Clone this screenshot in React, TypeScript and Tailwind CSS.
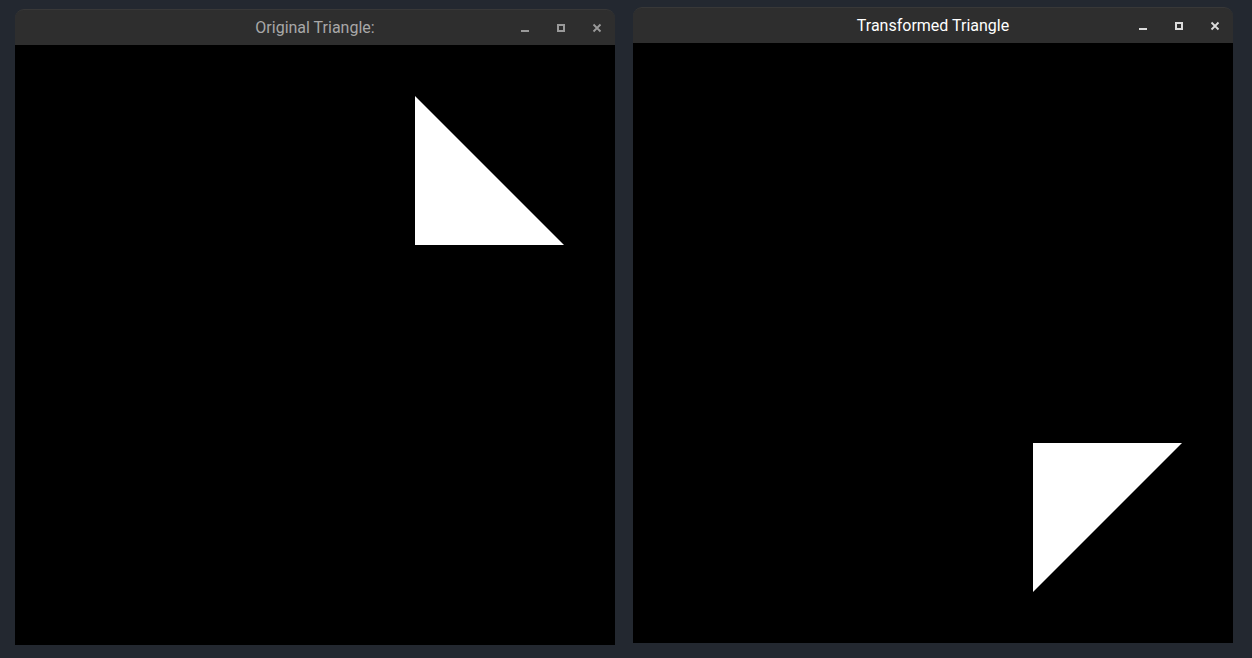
import React from "react";

function Controls({ color }: { color: string }) {
  return (
    <div className="absolute right-0 top-0 h-full flex items-center">
      <div className="w-[36px] h-full flex items-center justify-center">
        <svg width="12" height="12" viewBox="0 0 12 12">
          <rect x="2" y="8" width="8" height="2" fill={color} />
        </svg>
      </div>
      <div className="w-[36px] h-full flex items-center justify-center">
        <svg width="12" height="12" viewBox="0 0 12 12">
          <rect x="3" y="3" width="6" height="6" fill="none" stroke={color} strokeWidth="2" />
        </svg>
      </div>
      <div className="w-[36px] h-full flex items-center justify-center">
        <svg width="12" height="12" viewBox="0 0 12 12">
          <path d="M2.5 2.5 L9.5 9.5 M9.5 2.5 L2.5 9.5" stroke={color} strokeWidth="1.8" />
        </svg>
      </div>
    </div>
  );
}

function Win({
  title,
  active,
  points,
  className,
}: {
  title: string;
  active: boolean;
  points: string;
  className: string;
}) {
  return (
    <div className={"w-[600px] flex flex-col " + className}>
      <div className="relative h-[36px] bg-[#2e2e2e] rounded-t-[9px] border-t border-[#383838] flex items-center justify-center">
        <span
          className={
            "text-[16px] " + (active ? "text-[#ffffff]" : "text-[#a8a8a8]")
          }
          style={{ fontFamily: "Roboto, 'Noto Sans', sans-serif" }}
        >
          {title}
        </span>
        <div className="absolute right-[0px] top-0 h-full">
          <Controls color={active ? "#dcdcdc" : "#9a9a9a"} />
        </div>
      </div>
      <div className="h-[600px] bg-black">
        <svg width="600" height="600" viewBox="0 0 600 600" className="block">
          <polygon points={points} fill="#ffffff" />
        </svg>
      </div>
    </div>
  );
}

export default function App() {
  return (
    <div className="w-[1252px] h-[658px] bg-[#232830] flex items-start overflow-hidden">
      <Win
        title="Original Triangle:"
        active={false}
        points="400,51 400,200 549,200"
        className="ml-[15px] mt-[9px]"
      />
      <Win
        title="Transformed Triangle"
        active={true}
        points="400,400 549,400 400,549"
        className="ml-[18px] mt-[7px]"
      />
    </div>
  );
}
